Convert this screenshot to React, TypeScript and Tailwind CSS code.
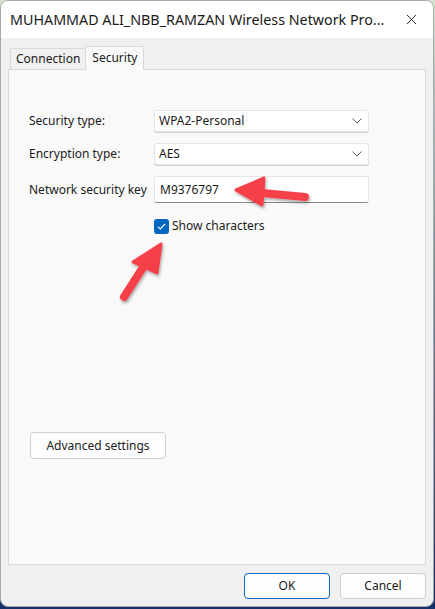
import { X } from "lucide-react";

const font = { fontFamily: '"Noto Sans", "Open Sans", sans-serif' };

const Chevron = () => (
  <svg width="10" height="6" viewBox="0 0 10 6" className="text-[#5f5f5f]">
    <path d="M0.5 0.5 L5 5 L9.5 0.5" fill="none" stroke="currentColor" strokeWidth="1" />
  </svg>
);

const Select = ({ value }: { value: string }) => (
  <div className="flex h-[22px] w-[215px] items-center justify-between rounded-[3px] border border-[#e5e5e5] bg-white pl-[4px] pr-[6px] shadow-[0_1px_0_#d0d0d0]">
    <span>{value}</span>
    <Chevron />
  </div>
);

const Arrows = () => (
  <svg
    className="pointer-events-none absolute left-0 top-0"
    width="435"
    height="609"
    viewBox="0 0 435 609"
  >
    <defs>
      <filter id="sh" x="-20%" y="-20%" width="140%" height="140%">
        <feDropShadow dx="1" dy="2" stdDeviation="1.5" floodColor="#000" floodOpacity="0.35" />
      </filter>
    </defs>
    <g filter="url(#sh)" fill="#f6404a" stroke="#f6404a" strokeLinejoin="round" strokeLinecap="round">
      <path d="M262 193 L305 197" strokeWidth="8" fill="none" />
      <path d="M236 190 L264 178 L262 205 Z" strokeWidth="3" />
      <path d="M149 258 L124 297" strokeWidth="8" fill="none" />
      <path d="M161 244 L133 262 L157 273 Z" strokeWidth="3" />
    </g>
  </svg>
);

export default function App() {
  return (
    <div
      className="relative h-[609px] w-[435px] overflow-hidden bg-gradient-to-b from-[#d5e3cf] via-[#6f7f9a] to-[#15306a] text-[12px] text-[#1b1b1b]"
      style={font}
    >
      <div className="flex h-[607px] w-[434px] flex-col overflow-hidden rounded-[8px] border border-[#a9a9a9] bg-[#f0f0f0]">
        <div className="flex h-[37px] shrink-0 items-center justify-between bg-white pl-[9px] pr-[13px]">
          <span className="whitespace-nowrap text-[14.3px] text-[#1a1a1a]">
            MUHAMMAD ALI_NBB_RAMZAN Wireless Network Pro...
          </span>
          <X size={17} strokeWidth={1.3} className="shrink-0 text-[#1a1a1a]" />
        </div>

        <div className="flex flex-1 flex-col px-[7px] pt-[8px]">
          <div className="flex h-[23px] items-end pl-[2px]">
            <div className="-mr-px flex h-[21px] items-center border border-b-0 border-[#d9d9d9] bg-[#f0f0f0] px-[5px]">
              Connection
            </div>
            <div className="relative z-10 -mb-px flex h-[24px] items-start border border-b-0 border-[#d9d9d9] bg-[#f9f9f9] px-[6px] pt-[2px]">
              Security
            </div>
          </div>

          <div className="flex h-[496px] flex-col border border-[#d9d9d9] bg-[#f9f9f9] pl-[20px] pt-[40px]">
            <div className="flex flex-col gap-[11px]">
              <div className="flex items-center">
                <span className="w-[125px]">Security type:</span>
                <Select value="WPA2-Personal" />
              </div>
              <div className="flex items-center">
                <span className="w-[125px]">Encryption type:</span>
                <Select value="AES" />
              </div>
              <div className="flex items-center">
                <span className="w-[125px]">Network security key</span>
                <div className="flex h-[27px] w-[215px] items-center rounded-[3px] border border-[#e5e5e5] border-b-[#8a8a8a] bg-white pl-[5px]">
                  M9376797
                </div>
              </div>
            </div>

            <div className="ml-[125px] mt-[14px] flex items-center gap-[3px]">
              <div className="flex h-[15px] w-[15px] items-center justify-center rounded-[3px] bg-[#0067c0]">
                <svg width="9" height="7" viewBox="0 0 9 7">
                  <path d="M1 3.8 L3.3 6 L8 1" fill="none" stroke="white" strokeWidth="1.1" />
                </svg>
              </div>
              <span>Show characters</span>
            </div>

            <button className="ml-[1px] mt-[197px] flex h-[27px] w-[136px] items-center justify-center rounded-[4px] border border-[#d0d0d0] bg-[#fdfdfd]">
              Advanced settings
            </button>
          </div>

          <div className="flex flex-1 items-center justify-end gap-[10px] pr-[0px]">
            <button className="flex h-[26px] w-[86px] items-center justify-center rounded-[4px] border border-[#0067c0] bg-[#fdfdfd]">
              OK
            </button>
            <button className="flex h-[26px] w-[86px] items-center justify-center rounded-[4px] border border-[#d0d0d0] bg-[#fdfdfd]">
              Cancel
            </button>
          </div>
        </div>
      </div>
      <Arrows />
    </div>
  );
}
